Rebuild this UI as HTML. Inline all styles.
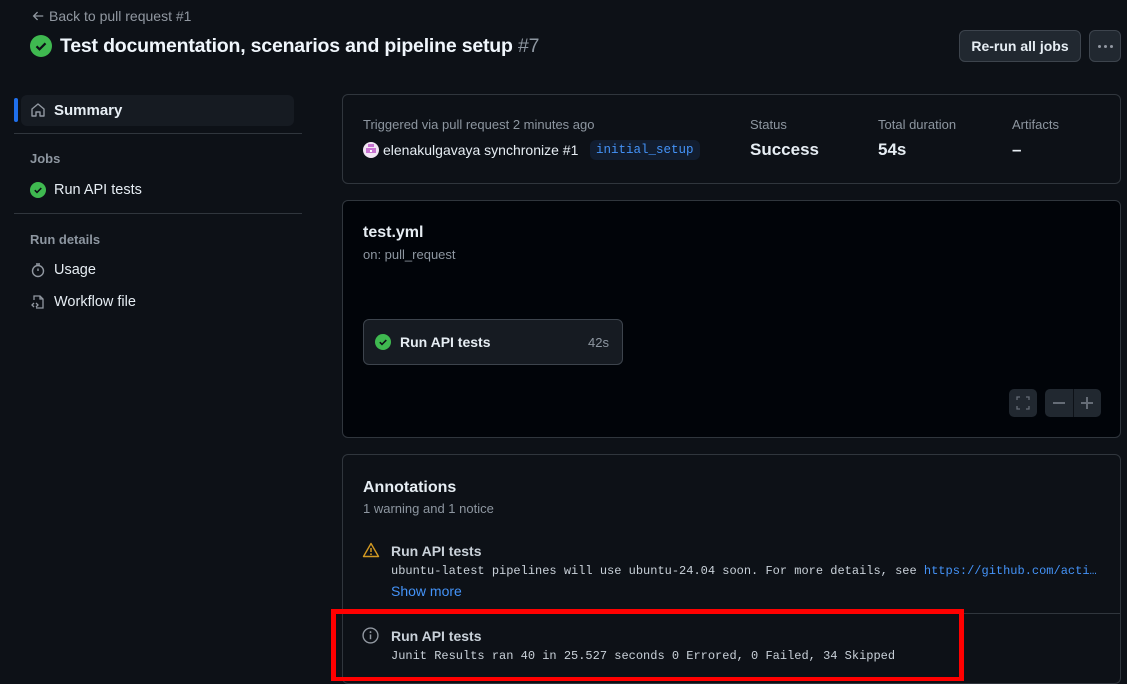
<!DOCTYPE html>
<html><head><meta charset="utf-8"><style>
*{box-sizing:border-box;margin:0;padding:0}
body{width:1127px;height:681px;overflow:hidden;background:#0d1117;color:#e6edf3;font-family:"Liberation Sans",sans-serif;position:relative}
.a{position:absolute}
.mono{font-family:"Liberation Mono",monospace;font-size:12px}
.card{position:absolute;border:1px solid #30363d;border-radius:6px}
.muted{color:#8d96a0}
</style></head><body>
<div class="a muted" style="left:31px;top:8px;font-size:14px;color:#9198a1">
<svg width="14" height="14" viewBox="0 0 16 16" style="vertical-align:-2px;margin-right:4px"><path d="M14 8H3M7.5 3.5 3 8l4.5 4.5" stroke="#9198a1" stroke-width="1.5" fill="none"/></svg>Back to pull request #1</div>
<svg class="a" style="left:30px;top:35px" width="22" height="22" viewBox="0 0 22 22"><circle cx="11" cy="11" r="11" fill="#3fb950"/><path d="M6.5 11.3l3 3 6-6" stroke="#0d1117" stroke-width="2.2" fill="none"/></svg>
<div class="a" style="left:60px;top:35px;font-size:19.5px;font-weight:bold;color:#f0f6fc;letter-spacing:-0.2px">Test documentation, scenarios and pipeline setup <span style="font-weight:normal;color:#8d96a0">#7</span></div>
<div class="a" style="left:959px;top:30px;width:122px;height:32px;background:#212830;border:1px solid #3d444d;border-radius:6px;font-size:14px;font-weight:bold;text-align:center;line-height:30px">Re-run all jobs</div>
<div class="a" style="left:1089px;top:30px;width:32px;height:32px;background:#212830;border:1px solid #3d444d;border-radius:6px"></div>
<div class="a" style="left:1098px;top:45px;width:3px;height:3px;border-radius:50%;background:#9198a1"></div>
<div class="a" style="left:1104px;top:45px;width:3px;height:3px;border-radius:50%;background:#9198a1"></div>
<div class="a" style="left:1110px;top:45px;width:3px;height:3px;border-radius:50%;background:#9198a1"></div>

<div class="a" style="left:14px;top:98px;width:4px;height:24px;background:#1f6feb;border-radius:2px"></div>
<div class="a" style="left:21px;top:95px;width:273px;height:31px;background:#161b22;border-radius:6px"></div>
<svg class="a" style="left:30px;top:102px" width="16" height="16" viewBox="0 0 16 16"><path d="M2 7 8 2l6 5v7H10v-4H6v4H2z" stroke="#9198a1" stroke-width="1.4" fill="none" stroke-linejoin="round"/></svg>
<div class="a" style="left:54px;top:102px;font-size:15px;font-weight:bold">Summary</div>
<div class="a" style="left:14px;top:133px;width:288px;height:1px;background:#30363d"></div>
<div class="a muted" style="left:30px;top:151px;font-size:13px;font-weight:bold">Jobs</div>
<svg class="a" style="left:30px;top:182px" width="16" height="16" viewBox="0 0 16 16"><circle cx="8" cy="8" r="8" fill="#3fb950"/><path d="M4.8 8.2l2.2 2.2 4.3-4.3" stroke="#0d1117" stroke-width="1.6" fill="none"/></svg>
<div class="a" style="left:54px;top:182px;font-size:14.5px">Run API tests</div>
<div class="a" style="left:14px;top:213px;width:288px;height:1px;background:#30363d"></div>
<div class="a muted" style="left:30px;top:232px;font-size:13px;font-weight:bold">Run details</div>
<svg class="a" style="left:30px;top:262px" width="16" height="16" viewBox="0 0 16 16"><circle cx="8" cy="9" r="5.5" stroke="#9198a1" stroke-width="1.4" fill="none"/><path d="M6 2h4M8 9V6.5" stroke="#9198a1" stroke-width="1.4"/></svg>
<div class="a" style="left:54px;top:262px;font-size:14.5px">Usage</div>
<svg class="a" style="left:30px;top:294px" width="16" height="16" viewBox="0 0 16 16"><path d="M4 6V2h6l3 3v9H6M10 2v3h3M4 9l-2 2 2 2M6 9l2 2-2 2" stroke="#9198a1" stroke-width="1.3" fill="none"/></svg>
<div class="a" style="left:54px;top:294px;font-size:14.5px">Workflow file</div>

<div class="card" style="left:342px;top:94px;width:779px;height:90px;background:#0d1117"></div>
<div class="a muted" style="left:363px;top:117px;font-size:13px">Triggered via pull request 2 minutes ago</div>
<svg class="a" style="left:363px;top:142px" width="16" height="16" viewBox="0 0 16 16"><circle cx="8" cy="8" r="8" fill="#f2e6f4"/><rect x="3" y="6" width="10" height="5" fill="#c874d2"/><rect x="5" y="2" width="6" height="3" fill="#c874d2"/><rect x="7" y="8" width="2" height="2" fill="#fff"/></svg>
<div class="a" style="left:383px;top:142px;font-size:14px">elenakulgavaya synchronize #1</div>
<div class="a mono" style="left:590px;top:140px;height:20px;line-height:20px;padding:0 6px;background:#121d2f;color:#4493f8;border-radius:6px;font-size:12.5px">initial_setup</div>
<div class="a muted" style="left:750px;top:117px;font-size:13px">Status</div>
<div class="a" style="left:750px;top:140px;font-size:17px;font-weight:bold">Success</div>
<div class="a muted" style="left:878px;top:117px;font-size:13px">Total duration</div>
<div class="a" style="left:878px;top:140px;font-size:17px;font-weight:bold">54s</div>
<div class="a muted" style="left:1012px;top:117px;font-size:13px">Artifacts</div>
<div class="a" style="left:1012px;top:140px;font-size:17px;font-weight:bold">–</div>

<div class="card" style="left:342px;top:200px;width:779px;height:238px;background:#010409"></div>
<div class="a" style="left:363px;top:224px;font-size:16px;font-weight:bold">test.yml</div>
<div class="a muted" style="left:363px;top:247px;font-size:13px">on: pull_request</div>
<div class="a" style="left:363px;top:319px;width:260px;height:46px;background:#161b22;border:1px solid #3d444d;border-radius:6px"></div>
<svg class="a" style="left:375px;top:334px" width="16" height="16" viewBox="0 0 16 16"><circle cx="8" cy="8" r="8" fill="#3fb950"/><path d="M4.8 8.2l2.2 2.2 4.3-4.3" stroke="#0d1117" stroke-width="1.6" fill="none"/></svg>
<div class="a" style="left:400px;top:334px;font-size:14px;font-weight:bold">Run API tests</div>
<div class="a muted" style="left:588px;top:335px;font-size:13px">42s</div>
<div class="a" style="left:1009px;top:389px;width:28px;height:28px;background:#212830;border-radius:5px"></div>
<svg class="a" style="left:1016px;top:396px" width="14" height="14" viewBox="0 0 14 14"><path d="M1 4V1h3M10 1h3v3M13 10v3h-3M4 13H1v-3" stroke="#656c76" stroke-width="1.3" fill="none"/></svg>
<div class="a" style="left:1045px;top:389px;width:56px;height:28px;background:#212830;border-radius:5px"></div>
<div class="a" style="left:1073px;top:389px;width:1px;height:28px;background:#0d1117"></div>
<div class="a" style="left:1053px;top:402px;width:12px;height:1.5px;background:#656c76"></div>
<div class="a" style="left:1081px;top:402px;width:12px;height:1.5px;background:#656c76"></div>
<div class="a" style="left:1086px;top:397px;width:1.5px;height:12px;background:#656c76"></div>

<div class="card" style="left:342px;top:454px;width:779px;height:230px;background:#0d1117"></div>
<div class="a" style="left:363px;top:479px;font-size:16px;font-weight:bold">Annotations</div>
<div class="a muted" style="left:363px;top:501px;font-size:13px">1 warning and 1 notice</div>
<svg class="a" style="left:362px;top:542px" width="18" height="16" viewBox="0 0 18 16"><path d="M9 1.5 1.5 14.5h15z" stroke="#d29922" stroke-width="1.4" fill="none" stroke-linejoin="round"/><path d="M9 6v4" stroke="#d29922" stroke-width="1.5"/><circle cx="9" cy="12.2" r=".9" fill="#d29922"/></svg>
<div class="a" style="left:391px;top:543px;font-size:14px;font-weight:bold;color:#c9d1d9">Run API tests</div>
<div class="a mono" style="left:391px;top:564px;color:#c9d1d9;white-space:nowrap">ubuntu-latest pipelines will use ubuntu-24.04 soon. For more details, see <span style="color:#4493f8">https://github.com/acti…</span></div>
<div class="a" style="left:391px;top:583px;font-size:14px;color:#4493f8">Show more</div>
<div class="a" style="left:343px;top:613px;width:777px;height:1px;background:#30363d"></div>
<svg class="a" style="left:362px;top:627px" width="17" height="17" viewBox="0 0 16 16"><circle cx="8" cy="8" r="7" stroke="#9198a1" stroke-width="1.3" fill="none"/><path d="M8 7v4.5" stroke="#9198a1" stroke-width="1.4"/><circle cx="8" cy="4.8" r=".9" fill="#9198a1"/></svg>
<div class="a" style="left:391px;top:628px;font-size:14px;font-weight:bold;color:#c9d1d9">Run API tests</div>
<div class="a mono" style="left:391px;top:649px;color:#c9d1d9;white-space:nowrap">Junit Results ran 40 in 25.527 seconds 0 Errored, 0 Failed, 34 Skipped</div>
<div class="a" style="left:331px;top:609px;width:633px;height:72px;border:5px solid #ff0000;border-bottom-width:4px"></div>
</body></html>
